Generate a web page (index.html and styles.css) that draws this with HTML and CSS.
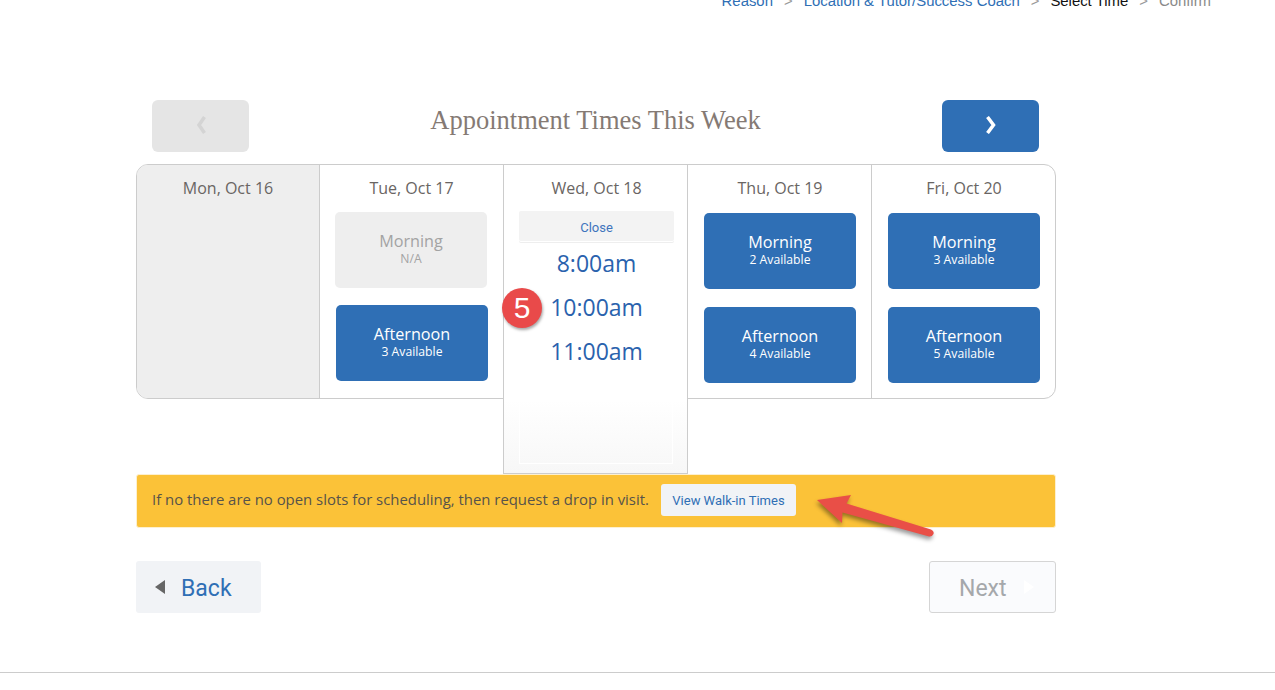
FILE: index.html
```html
<!DOCTYPE html>
<html lang="en">
<head>
  <meta charset="UTF-8">
  <title>Select Time</title>
  <link rel="stylesheet" href="styles.css">
</head>
<body>

<nav class="steps">
  <a href="#">Reason</a>
  <span class="sep">&gt;</span>
  <a href="#">Location &amp; Tutor/Success Coach</a>
  <span class="sep">&gt;</span>
  <span class="current">Select Time</span>
  <span class="sep">&gt;</span>
  <span class="todo">Confirm</span>
</nav>

<main class="page">
  <div class="week-nav">
    <button class="week-btn off">
      <svg width="12" height="18" viewBox="0 0 12 18"><path d="M9.500 1 4 9l5.500 8" fill="none" stroke="#d4d4d4" stroke-width="3.500"/></svg>
    </button>
    <h1>Appointment Times This Week</h1>
    <button class="week-btn">
      <svg width="12" height="18" viewBox="0 0 12 18"><path d="M2.500 1 8.500 9l-6 8" fill="none" stroke="#fff" stroke-width="3.500"/></svg>
    </button>
  </div>

  <div class="days">
    <div class="day closed">
      <div class="day-name">Mon, Oct 16</div>
    </div>

    <div class="day tue">
      <div class="day-name">Tue, Oct 17</div>
      <a class="slot na" href="#">Morning<small>N/A</small></a>
      <a class="slot" href="#">Afternoon<small>3 Available</small></a>
    </div>

    <div class="day open">
      <div class="day-name">Wed, Oct 18</div>
      <a class="close-btn" href="#">Close</a>
      <a class="time" href="#">8:00am</a>
      <a class="time" href="#">10:00am</a>
      <a class="time" href="#">11:00am</a>
      <div class="ghost"></div>
      <span class="badge">5</span>
    </div>

    <div class="day">
      <div class="day-name">Thu, Oct 19</div>
      <a class="slot" href="#">Morning<small>2 Available</small></a>
      <a class="slot" href="#">Afternoon<small>4 Available</small></a>
    </div>

    <div class="day">
      <div class="day-name">Fri, Oct 20</div>
      <a class="slot" href="#">Morning<small>3 Available</small></a>
      <a class="slot" href="#">Afternoon<small>5 Available</small></a>
    </div>
  </div>

  <div class="notice">
    <span class="notice-text">If no there are no open slots for scheduling, then request a drop in visit.</span>
    <a class="walkin" href="#">View Walk-in Times</a>
    <!-- annotation arrow from the screenshot -->
    <svg class="arrow" width="130" height="54" viewBox="0 0 130 54">
      <path d="M7 10 41 5 36.500 13.500 121 39.500Q124.500 41 123.500 44 122 47 119 46.500L32.500 22.500 32 33Z" fill="#e94f47"/>
    </svg>
  </div>

  <div class="actions">
    <a class="back" href="#"><i class="tri-left"></i><span>Back</span></a>
    <a class="next" href="#"><span>Next</span><i class="tri-right"></i></a>
  </div>
</main>

<hr class="rule">

</body>
</html>
```

FILE: styles.css
```css
* {
  box-sizing: border-box;
}

html, body {
  height: 690px;
  overflow: hidden;
}

body {
  margin: 0;
  background: #fff;
  font-family: "Open Sans", sans-serif;
  color: #696563;
}

a {
  text-decoration: none;
}

/* Breadcrumb, cut off by the top of the window */
.steps {
  display: flex;
  justify-content: flex-end;
  gap: 11px;
  height: 16px;
  margin-top: -7px;
  padding-right: 64px;
  font-family: "Liberation Sans", sans-serif;
  font-size: 14.900px;
  line-height: 16px;
}

.steps a {
  color: #2f6fb5;
}

.steps .sep {
  color: #999;
}

.steps .current {
  color: #111;
}

.steps .todo {
  color: #8a8a8a;
}

.page {
  width: 920px;
  margin: 91px 0 0 136px;
}

/* Week header */
.week-nav {
  display: flex;
  align-items: flex-start;
  justify-content: space-between;
  height: 52px;
  padding: 0 17px 0 16px;
}

.week-nav h1 {
  margin: 0;
  font-family: "Liberation Serif", serif;
  font-size: 26.500px;
  font-weight: 400;
  line-height: 41px;
  color: #857a74;
}

.week-btn {
  display: flex;
  align-items: center;
  justify-content: center;
  width: 97px;
  height: 52px;
  padding: 0 0 2px;
  border: 0;
  border-radius: 6px;
  background: #2f6fb5;
}

.week-btn.off {
  background: #e5e5e5;
}

/* Day columns */
.days {
  display: grid;
  grid-template-columns: 182px repeat(4, 184px);
  grid-template-rows: 233px;
  height: 235px;
  margin-top: 12px;
  border: 1px solid #ccc;
  border-radius: 12px;
}

.day {
  padding: 0 15px 0 16px;
  border-left: 1px solid #ccc;
}

.day.tue {
  padding-left: 15px;
}

.day.closed {
  padding: 0;
  border-left: 0;
  border-radius: 11px 0 0 11px;
  background: #eee;
}

.day-name {
  height: 47px;
  font-size: 16px;
  line-height: 46px;
  text-align: center;
}

.slot {
  display: flex;
  flex-direction: column;
  align-items: center;
  justify-content: center;
  width: 152px;
  height: 76px;
  margin: 1px 0 18px;
  padding-bottom: 2px;
  border-radius: 5px;
  background: #2f6fb5;
  color: #fff;
  font-size: 16.200px;
  line-height: 19px;
}

.slot small {
  margin-top: 1px;
  font-size: 12.200px;
  line-height: 14px;
}

.slot.na {
  margin: 0 0 17px;
  background: #eee;
  color: #a3a3a3;
}

.tue .slot:last-child {
  margin-left: 1px;
}

/* Wednesday is opened up and hangs below the table */
.day.open {
  position: relative;
  height: 309px;
  margin-right: -1px;
  padding: 0 13px 0 15px;
  border-right: 1px solid #ccc;
  border-bottom: 1px solid #ccc;
  background: linear-gradient(#fff 235px, #f7f7f7);
  z-index: 1;
}

.close-btn {
  display: block;
  height: 30px;
  margin: -1px 0 0;
  border-radius: 2px;
  background: #f3f3f3;
  box-shadow: 0 1px 0 #fff, 0 2px 0 #eee;
  color: #3f74bd;
  font-family: Roboto, sans-serif;
  font-size: 13px;
  line-height: 33px;
  text-align: center;
}

.time {
  display: block;
  height: 44px;
  font-size: 23px;
  line-height: 44px;
  text-align: center;
  color: #2a62ad;
}

.ghost {
  height: 66px;
  margin: 25px 1px 0 0;
  border: 1px solid #fff;
}

.badge {
  position: absolute;
  left: -2px;
  top: 123px;
  width: 40px;
  height: 40px;
  border-radius: 50%;
  background: #e94a4a;
  box-shadow: 1px 2px 3px rgba(0, 0, 0, 0.35);
  color: #fff;
  font-family: "Liberation Sans", sans-serif;
  font-size: 30px;
  line-height: 40px;
  text-align: center;
}

/* Yellow notice */
.notice {
  position: relative;
  display: flex;
  align-items: center;
  gap: 12px;
  height: 54px;
  margin-top: 75px;
  padding-left: 15px;
  border: 1px solid #fdf0cf;
  border-radius: 3px;
  background: #fbc238;
  color: #57534a;
  font-size: 14.900px;
}

.notice-text {
  padding-bottom: 4px;
}

.walkin {
  width: 135px;
  height: 32px;
  margin-bottom: 2px;
  border-radius: 3px;
  background: #f1f3f6;
  color: #2f6fb5;
  font-family: Roboto, sans-serif;
  font-size: 13px;
  line-height: 33px;
  text-align: center;
}

.arrow {
  position: absolute;
  left: 673px;
  top: 15px;
  filter: drop-shadow(-1px 3px 2px rgba(0, 0, 0, 0.4));
}

/* Back / Next */
.actions {
  display: flex;
  justify-content: space-between;
  margin-top: 33px;
}

.back, .next {
  display: flex;
  align-items: center;
  height: 52px;
  border-radius: 3px;
  font-family: Roboto, sans-serif;
  font-size: 23px;
}

.back span, .next span {
  padding-top: 2px;
}

.back {
  width: 125px;
  padding-left: 19px;
  background: #f1f3f6;
  color: #2f6fb5;
}

.next {
  width: 127px;
  padding-left: 29px;
  border: 1px solid #d5d5d5;
  background: #fafbfd;
  color: #a5a8ab;
}

.tri-left {
  width: 0;
  height: 0;
  margin-right: 16px;
  border-top: 7px solid transparent;
  border-bottom: 7px solid transparent;
  border-right: 10px solid #666;
}

.tri-right {
  width: 0;
  height: 0;
  margin-left: 17px;
  border-top: 7px solid transparent;
  border-bottom: 7px solid transparent;
  border-left: 10px solid #fff;
}

.rule {
  height: 1px;
  margin: 59px 0 0;
  border: 0;
  background: #ccc;
}
```
